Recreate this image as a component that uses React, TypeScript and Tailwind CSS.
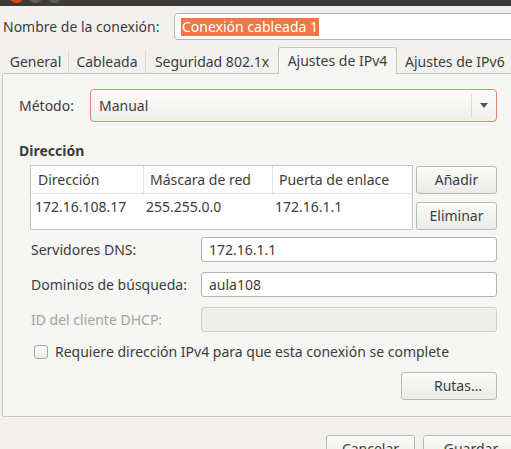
import React from "react";

const font = { fontFamily: '"Noto Sans", "DejaVu Sans", sans-serif' };

const Entry = ({
  value,
  disabled,
  className = "",
}: {
  value?: string;
  disabled?: boolean;
  className?: string;
}) => (
  <div
    className={`h-[25px] rounded-[3px] border flex items-center px-[7px] ${
      disabled ? "bg-[#efeeed] border-[#cfcecc]" : "bg-white border-[#b5b4b1]"
    } ${className}`}
  >
    {value}
  </div>
);

const Btn = ({ label, className = "" }: { label: string; className?: string }) => (
  <div
    className={`h-[28px] rounded-[3px] border border-[#b9b8b5] bg-gradient-to-b from-[#fbfbfa] to-[#ecebea] flex items-center justify-center ${className}`}
  >
    {label}
  </div>
);

export default function App() {
  return (
    <div
      className="w-[511px] h-[449px] overflow-hidden bg-[#f2f1f0] text-[14px] text-[#3c3c3c] leading-none"
      style={font}
    >
      {/* title bar strip */}
      <div className="h-[6px] bg-[#3c3b37] relative overflow-hidden">
        <div className="absolute left-[9px] -top-[12px] w-[15px] h-[15px] rounded-full bg-[#df4a16]" />
        <div className="absolute left-[28px] -top-[12px] w-[15px] h-[15px] rounded-full bg-[#5f5e5a]" />
        <div className="absolute left-[47px] -top-[12px] w-[15px] h-[15px] rounded-full bg-[#5f5e5a]" />
      </div>

      {/* connection name */}
      <div className="flex items-center mt-[7px] h-[27px]">
        <div className="w-[174px] pl-[3px]">Nombre de la conexión:</div>
        <div className="flex-1 h-[27px] -mr-[6px] rounded-[4px] border border-[#b5b4b1] bg-white flex items-center pl-[6px]">
          <span className="bg-[#f07746] text-white px-[1px] h-[18px] flex items-center">
            Conexión cableada 1
          </span>
        </div>
      </div>

      {/* tabs */}
      <div className="flex items-end mt-[7px] h-[26px] pl-[3px]">
        <div className="h-[23px] w-[66px] flex items-center justify-center border-r border-[#dcdbd9]">General</div>
        <div className="h-[23px] w-[77px] flex items-center justify-center border-r border-[#dcdbd9]">Cableada</div>
        <div className="h-[23px] w-[132px] flex items-center justify-center">Seguridad 802.1x</div>
        <div className="h-[27px] w-[119px] -mb-[1px] relative z-10 flex items-center justify-center bg-[#f6f6f5] border border-b-0 border-[#c6c5c2] rounded-t-[3px]">
          Ajustes de IPv4
        </div>
        <div className="h-[23px] flex-1 flex items-center pl-[8px] whitespace-nowrap">Ajustes de IPv6</div>
      </div>

      {/* notebook page */}
      <div className="ml-[2px] -mr-[4px] h-[344px] border border-[#c6c5c2] bg-[#f6f6f5] rounded-[2px] pl-[16px] pr-[17px] pt-[15px]">
        <div className="flex items-center h-[33px]">
          <div className="w-[71px]">Método:</div>
          <div className="flex-1 h-[33px] rounded-[4px] border border-[#e08866] bg-gradient-to-b from-[#fdfdfc] to-[#efeeed] flex items-center">
            <div className="flex-1 pl-[8px]">Manual</div>
            <div className="w-px h-[24px] bg-[#dad9d7]" />
            <div className="w-[24px] flex justify-center">
              <svg width="8" height="5" viewBox="0 0 8 5">
                <path d="M0 0 H8 L4 5 Z" fill="#555" />
              </svg>
            </div>
          </div>
        </div>

        <div className="font-bold mt-[21px] h-[16px] flex items-center">Dirección</div>

        <div className="flex mt-[6px] ml-[11px]">
          <div className="w-[383px] h-[65px] bg-white border border-[#c6c5c2]">
            <div className="flex h-[28px] border-b border-[#e2e1df]">
              <div className="w-[113px] border-r border-[#e2e1df] flex items-center pl-[7px]">Dirección</div>
              <div className="w-[129px] border-r border-[#e2e1df] flex items-center pl-[6px]">Máscara de red</div>
              <div className="flex-1 flex items-center pl-[6px]">Puerta de enlace</div>
            </div>
            <div className="flex h-[26px]">
              <div className="w-[115px] flex items-center pl-[4px]">172.16.108.17</div>
              <div className="w-[129px] flex items-center">255.255.0.0</div>
              <div className="flex-1 flex items-center">172.16.1.1</div>
            </div>
          </div>
          <div className="flex-1 ml-[3px] pt-px flex flex-col gap-[8px]">
            <Btn label="Añadir" />
            <Btn label="Eliminar" />
          </div>
        </div>

        <div className="ml-[12px] mt-[7px] flex flex-col gap-[10px]">
          <div className="flex items-center">
            <div className="w-[170px]">Servidores DNS:</div>
            <Entry value="172.16.1.1" className="flex-1" />
          </div>
          <div className="flex items-center">
            <div className="w-[170px]">Dominios de búsqueda:</div>
            <Entry value="aula108" className="flex-1" />
          </div>
          <div className="flex items-center">
            <div className="w-[170px] text-[#a3a2a0]">ID del cliente DHCP:</div>
            <Entry disabled className="flex-1" />
          </div>
        </div>

        <div className="flex items-center mt-[12px] ml-[15px] h-[16px]">
          <div className="w-[14px] h-[14px] rounded-[3px] border border-[#a9a8a5] bg-gradient-to-b from-white to-[#ecebea]" />
          <div className="ml-[7px] whitespace-nowrap">Requiere dirección IPv4 para que esta conexión se complete</div>
        </div>

        <div className="flex justify-end mt-[12px]">
          <Btn label="Rutas…" className="w-[96px] justify-end pr-[14px]" />
        </div>
      </div>

      {/* dialog buttons */}
      <div className="flex justify-end gap-[8px] mt-[18px] -mr-[8px]">
        <Btn label="Cancelar" className="w-[89px]" />
        <Btn label="Guardar" className="w-[96px]" />
      </div>
    </div>
  );
}
